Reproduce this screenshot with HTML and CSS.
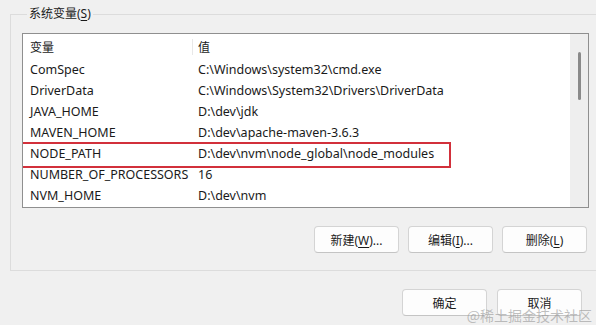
FILE: index.html
```html
<!DOCTYPE html>
<html lang="zh-CN">
<head>
<meta charset="utf-8">
<title>系统变量</title>
<link rel="stylesheet" href="styles.css">
</head>
<body>
<div class="dialog">
  <fieldset class="group">
    <legend class="group-title">系统变量(<u>S</u>)</legend>
    <div class="listbox">
      <div class="list-main">
        <div class="list-head">
          <div class="cell c1 cjk">变量</div>
          <div class="cell c2 cjk">值</div>
        </div>
        <div class="row"><div class="cell c1">ComSpec</div><div class="cell c2">C:\Windows\system32\cmd.exe</div></div>
        <div class="row"><div class="cell c1">DriverData</div><div class="cell c2">C:\Windows\System32\Drivers\DriverData</div></div>
        <div class="row"><div class="cell c1">JAVA_HOME</div><div class="cell c2">D:\dev\jdk</div></div>
        <div class="row"><div class="cell c1">MAVEN_HOME</div><div class="cell c2">D:\dev\apache-maven-3.6.3</div></div>
        <div class="row row-marked"><div class="cell c1">NODE_PATH</div><div class="cell c2">D:\dev\nvm\node_global\node_modules</div></div>
        <div class="row"><div class="cell c1">NUMBER_OF_PROCESSORS</div><div class="cell c2">16</div></div>
        <div class="row"><div class="cell c1">NVM_HOME</div><div class="cell c2">D:\dev\nvm</div></div>
      </div>
      <div class="scrollbar"><div class="thumb"></div></div>
    </div>
    <div class="group-actions">
      <button class="btn">新建(<u>W</u>)...</button>
      <button class="btn">编辑(<u>I</u>)...</button>
      <button class="btn">删除(<u>L</u>)</button>
    </div>
  </fieldset>
  <div class="dialog-actions">
    <button class="btn">确定</button>
    <button class="btn">取消</button>
  </div>
  <div class="watermark">@稀土掘金技术社区</div>
</div>
</body>
</html>
```
FILE: styles.css
```css
* { box-sizing: border-box; }
html, body {
  margin: 0;
  padding: 0;
  background: #f0f0f0;
  overflow: hidden;
}
body {
  width: 596px;
  height: 325px;
  font-family: "Noto Sans", "Noto Sans CJK SC", sans-serif;
  font-size: 12px;
  color: #1a1a1a;
}
.dialog {
  position: relative;
  width: 596px;
  height: 325px;
  padding-top: 7px;
}
.group {
  margin: 0 0 0 10px;
  padding: 0 0 16px 11px;
  width: 586px;
  height: 264px;
  border: 1px solid #dcdcdc;
  border-right: none;
  min-width: 0;
}
.group-title {
  margin-left: 5px;
  padding: 0 2px;
  height: 14px;
  line-height: 14px;
}
u { text-decoration-thickness: 1px; text-underline-offset: 2px; }
.listbox {
  margin-top: 12px;
  width: 567px;
  height: 175px;
  border: 1px solid #8f8f8f;
  background: #fff;
  display: flex;
  overflow: hidden;
}
.list-main {
  flex: 1;
  display: flex;
  flex-direction: column;
}
.list-head, .row {
  display: flex;
  align-items: center;
}
.list-head { height: 25px; }
.row { height: 21px; }
.cell { white-space: nowrap; font-size: 12.5px; }
.cell.cjk { font-size: 12px; }
.c1 { width: 169px; padding-left: 7px; }
.c2 { padding-left: 6px; }
.list-head .c2 {
  border-left: 1px solid #e8e8e8;
  padding-left: 5px;
  height: 16px;
  display: flex;
  align-items: center;
}
.row-marked { position: relative; }
.row-marked::after {
  content: "";
  position: absolute;
  left: -2px;
  top: -1px;
  width: 426px;
  height: 22px;
  border: 2px solid #d2303b;
}
.scrollbar {
  width: 18px;
  background: #eeeeee;
  display: flex;
  justify-content: center;
  padding-top: 18px;
}
.thumb {
  width: 3px;
  height: 48px;
  border-radius: 2px;
  background: #8a8a8a;
  margin-left: 1px;
}
.group-actions {
  margin-top: 18px;
  width: 567px;
  display: flex;
  justify-content: flex-end;
  gap: 9px;
  padding-right: 2px;
}
.btn {
  width: 85px;
  height: 27px;
  font: inherit;
  color: #1a1a1a;
  background: #fdfdfd;
  border: 1px solid #d4d4d4;
  border-bottom-color: #c4c4c4;
  border-radius: 4px;
  padding: 0;
}
.dialog-actions {
  margin-top: 18px;
  display: flex;
  justify-content: flex-end;
  gap: 10px;
  padding-right: 14px;
}
.watermark {
  position: absolute;
  right: 4px;
  bottom: 1px;
  font-family: "Noto Sans CJK SC", serif;
  font-size: 14px;
  color: rgba(150, 150, 150, 0.6);
  line-height: 18px;
}
```
